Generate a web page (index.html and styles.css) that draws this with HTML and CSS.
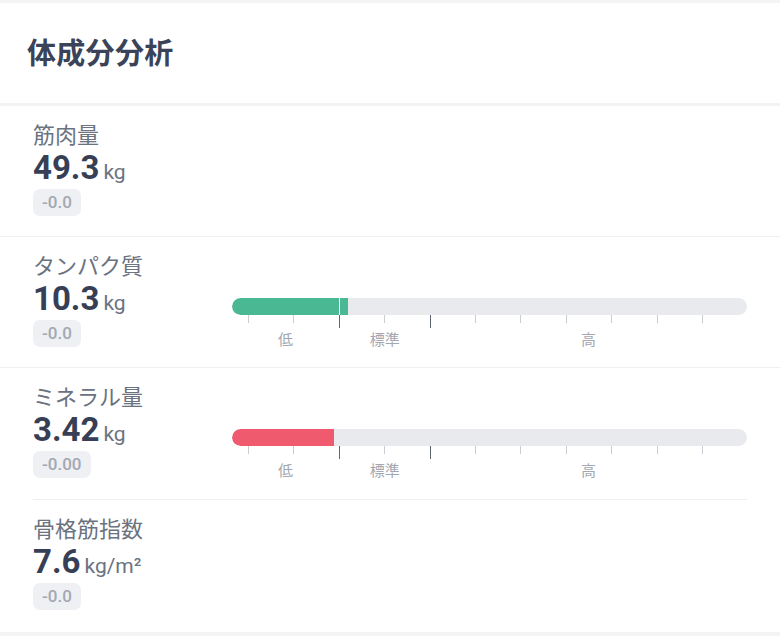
FILE: index.html
```html
<!DOCTYPE html>
<html lang="ja">
<head>
<meta charset="utf-8">
<link rel="stylesheet" href="styles.css">
</head>
<body>
<div class="page">
  <div class="strip-top"></div>
  <header class="header"><h1 class="title">体成分分析</h1></header>
  <div class="strip-mid"></div>

  <section class="row row-full">
    <div class="info">
      <div class="label">筋肉量</div>
      <div class="value"><span class="num">49.3</span><span class="unit">kg</span></div>
      <div class="badge">-0.0</div>
    </div>
  </section>

  <section class="row row-full">
    <div class="info">
      <div class="label">タンパク質</div>
      <div class="value"><span class="num">10.3</span><span class="unit">kg</span></div>
      <div class="badge">-0.0</div>
    </div>
    <div class="gauge">
      <div class="track"><div class="fill fill-green" style="width:22.5%"><span class="mark"></span></div></div>
      <div class="ticks">
        <span class="tick"></span><span class="tick"></span><span class="tick tick-major"></span><span class="tick"></span><span class="tick tick-major"></span><span class="tick"></span><span class="tick"></span><span class="tick"></span><span class="tick"></span><span class="tick"></span><span class="tick"></span>
      </div>
      <div class="zones"><span>低</span><span>標準</span><span>高</span></div>
    </div>
  </section>

  <section class="row row-inset">
    <div class="info">
      <div class="label">ミネラル量</div>
      <div class="value"><span class="num">3.42</span><span class="unit">kg</span></div>
      <div class="badge">-0.00</div>
    </div>
    <div class="gauge">
      <div class="track"><div class="fill fill-red" style="width:19.8%"></div></div>
      <div class="ticks">
        <span class="tick"></span><span class="tick"></span><span class="tick tick-major"></span><span class="tick"></span><span class="tick tick-major"></span><span class="tick"></span><span class="tick"></span><span class="tick"></span><span class="tick"></span><span class="tick"></span><span class="tick"></span>
      </div>
      <div class="zones"><span>低</span><span>標準</span><span>高</span></div>
    </div>
  </section>

  <section class="row row-last">
    <div class="info">
      <div class="label">骨格筋指数</div>
      <div class="value"><span class="num">7.6</span><span class="unit">kg/m²</span></div>
      <div class="badge">-0.0</div>
    </div>
  </section>

  <div class="strip-bottom"></div>
</div>
</body>
</html>
```

FILE: styles.css
```css
* { box-sizing: border-box; }
html, body { margin: 0; padding: 0; background: #ffffff; }
body {
  font-family: "Noto Sans CJK JP", "Noto Sans", sans-serif;
  width: 780px;
  height: 636px;
  overflow: hidden;
}
.page { display: flex; flex-direction: column; height: 636px; }
.strip-top { height: 3px; background: #f4f4f5; flex: none; }
.header {
  height: 100px;
  flex: none;
  display: flex;
  align-items: center;
  padding-left: 27px;
  padding-bottom: 3px;
}
.title {
  margin: 0;
  font-size: 29px;
  font-weight: 700;
  color: #3a4358;
  line-height: 1;
  letter-spacing: 0.3px;
}
.strip-mid { height: 3px; background: #f3f3f4; flex: none; }

.row {
  display: grid;
  grid-template-columns: 199px 1fr;
  padding: 0 33px;
  height: 131px;
  flex: none;
}
.row-full { border-bottom: 1px solid #efeff1; }
.row-inset {
  height: 132px;
  background-image: linear-gradient(#efeff1, #efeff1);
  background-size: 100% 1px;
  background-position: bottom;
  background-repeat: no-repeat;
  background-origin: content-box;
  background-clip: content-box;
}
.row-last { flex: 1; }

.info { display: flex; flex-direction: column; align-items: flex-start; }
.label {
  margin-top: 12px;
  font-size: 22px;
  line-height: 30px;
  color: #6b7280;
  white-space: nowrap;
}
.value {
  display: flex;
  align-items: baseline;
  height: 40px;
  line-height: 40px;
  white-space: nowrap;
}
.num {
  font-family: Roboto, "Noto Sans", sans-serif;
  font-weight: 700;
  font-size: 33px;
  color: #363f55;
}
.unit {
  font-family: Roboto, "Noto Sans", sans-serif;
  font-size: 21px;
  color: #6b7280;
  margin-left: 4px;
}
.badge {
  margin-top: 1px;
  height: 27px;
  padding: 0 9px;
  border-radius: 7px;
  background: #eef0f3;
  color: #a3a8b2;
  font-family: Roboto, "Noto Sans", sans-serif;
  font-weight: 500;
  font-size: 17px;
  line-height: 27px;
}

.gauge { padding-top: 61px; }
.track {
  height: 17px;
  border-radius: 9px;
  background: #e8eaee;
  overflow: hidden;
  display: flex;
}
.fill { height: 100%; border-radius: 9px 0 0 9px; position: relative; }
.fill-green { background: #4bb894; }
.fill-red { background: #ef5a6f; }
.mark {
  position: absolute;
  top: 0;
  bottom: 0;
  right: 8px;
  width: 1px;
  background: #ffffff;
}
.ticks {
  display: flex;
  justify-content: space-between;
  align-items: flex-start;
  margin-left: 3.1%;
  width: 88.4%;
  height: 13px;
}
.tick { width: 1px; height: 8px; background: #c9ccd3; }
.tick-major { height: 13px; background: #5f6672; }
.zones {
  display: grid;
  grid-template-columns: 20.8% 17.7% 1fr;
  margin-top: 0;
  font-size: 15px;
  line-height: 22px;
  color: #a3a7b0;
  text-align: center;
}
.strip-bottom { height: 4px; background: #f4f4f5; flex: none; }
```
